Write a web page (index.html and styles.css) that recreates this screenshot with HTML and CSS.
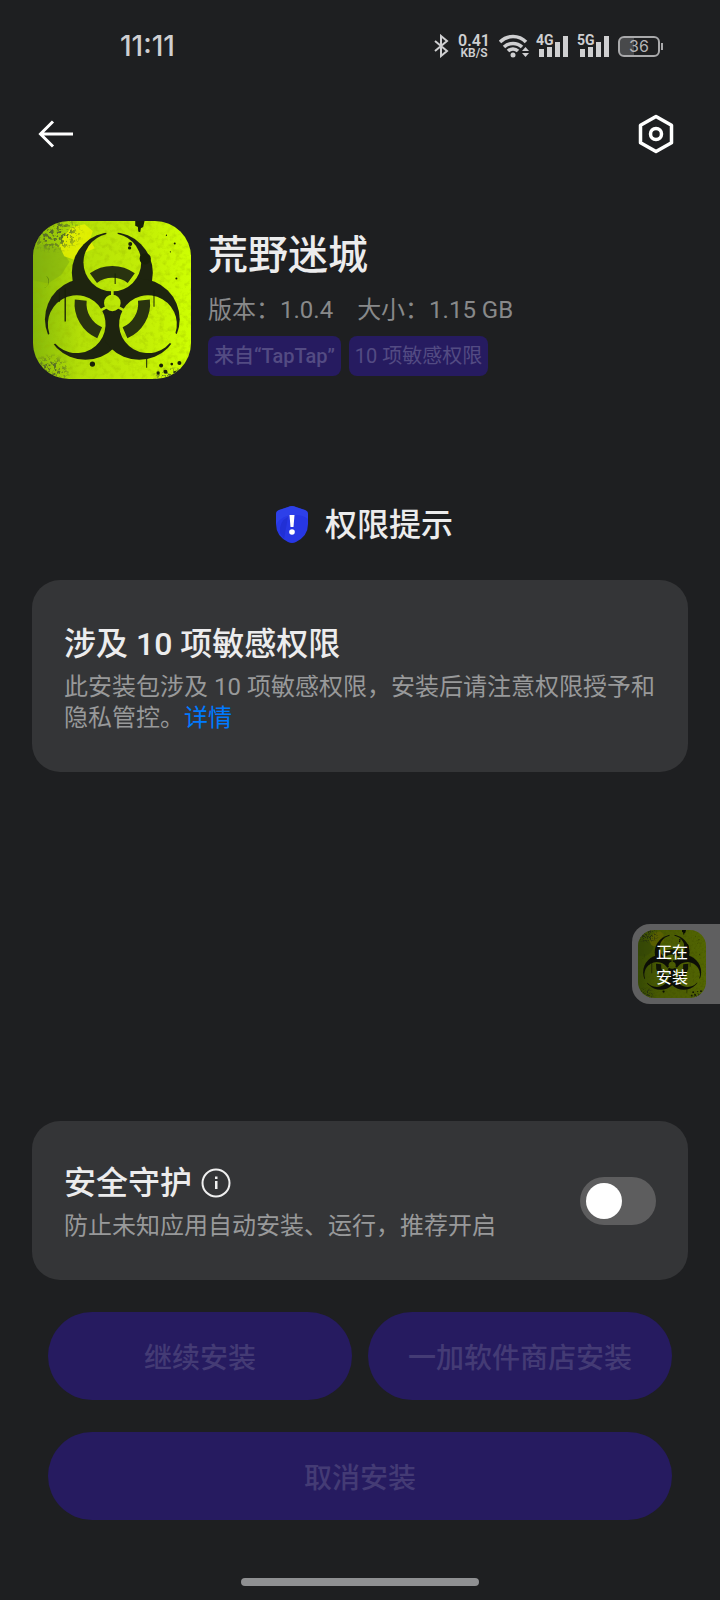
FILE: index.html
```html
<!DOCTYPE html>
<html lang="zh-CN">
<head>
  <meta charset="UTF-8">
  <meta name="viewport" content="width=device-width, initial-scale=1.0">
  <title>荒野迷城</title>
  <link rel="stylesheet" href="styles.css">
</head>
<body>
<!-- 应用图标，页面里用两次 -->
<svg class="defs" width="0" height="0" aria-hidden="true">
  <defs>
    <linearGradient id="lime" x1="0" y1="0" x2="1" y2="0">
      <stop offset="0" stop-color="#86b80a"/>
      <stop offset="0.3" stop-color="#b4e007"/>
      <stop offset="0.7" stop-color="#c3ee06"/>
      <stop offset="1" stop-color="#ceff02"/>
    </linearGradient>
    <radialGradient id="fade">
      <stop offset="0.4" stop-color="#fff"/>
      <stop offset="1" stop-color="#000"/>
    </radialGradient>
    <filter id="grunge" x="0" y="0" width="1" height="1">
      <feTurbulence type="fractalNoise" baseFrequency="0.1" numOctaves="3" seed="8"/>
      <feColorMatrix values="0 0 0 0 0.1  0 0 0 0 0.16  0 0 0 0 0.02  9 0 0 0 -4.5"/>
    </filter>
    <filter id="mottle" x="0" y="0" width="1" height="1">
      <feTurbulence type="fractalNoise" baseFrequency="0.06" numOctaves="4" seed="3"/>
      <feColorMatrix values="0 0 0 0 0.3  0 0 0 0 0.45  0 0 0 0 0  0 3 0 0 -1.4"/>
    </filter>
    <mask id="corners">
      <ellipse cx="100" cy="70" rx="95" ry="60" fill="url(#fade)"/>
      <ellipse cx="90" cy="485" rx="65" ry="55" fill="url(#fade)"/>
      <ellipse cx="460" cy="500" rx="70" ry="30" fill="url(#fade)"/>
    </mask>
    <mask id="cut">
      <rect x="38" y="32" width="476" height="476" fill="#fff"/>
      <g id="hole">
        <circle cx="277" cy="157" r="87"/>
        <path d="M259 50h34v40h-34zM273 230h8v50h-8z"/>
      </g>
      <use href="#hole" transform="rotate(120 277 281)"/>
      <use href="#hole" transform="rotate(240 277 281)"/>
      <circle cx="277" cy="279" r="25"/>
    </mask>
    <symbol id="app-art" viewBox="38 32 476 476">
      <rect x="38" y="32" width="476" height="476" fill="url(#lime)"/>
      <rect x="38" y="32" width="476" height="476" filter="url(#mottle)" opacity="0.3"/>
      <path d="M38 110q40-20 80 5l30 40-25 40-40 25-45-10z" fill="#7eac12" opacity="0.5"/>
      <path d="M130 80l24-30 40-8 24 20-8 26 14 26-30 14-28 22-34-12-14-30z" fill="#f2f500" opacity="0.7"/>
      <path d="M60 230q20 8 24-10 2-16-8-24 12 6 10 22-6 20-26 12z" fill="#577d0a"/>
      <rect x="38" y="32" width="476" height="476" filter="url(#grunge)" mask="url(#corners)"/>
      <g mask="url(#cut)" fill="#1e240f">
        <circle cx="277" cy="188" r="122"/>
        <circle cx="196" cy="328" r="122"/>
        <circle cx="358" cy="328" r="122"/>
      </g>
      <g fill="none" stroke="#29330f" stroke-width="36">
        <path id="arc" d="M220 204a96 96 0 0 1 114 0"/>
        <use href="#arc" transform="rotate(120 277 281)"/>
        <use href="#arc" transform="rotate(240 277 281)"/>
      </g>
      <g fill="#182008">
        <path d="M346 32h28l-4 18-7 4-2 12-6-2-1-14-8-4z"/>
        <circle cx="331" cy="101" r="6"/>
        <circle cx="329" cy="113" r="5"/>
        <circle cx="376" cy="146" r="17"/>
        <circle cx="217" cy="463" r="8"/>
        <circle cx="424" cy="467" r="6"/>
        <circle cx="415" cy="490" r="5"/>
        <circle cx="437" cy="486" r="6"/>
        <circle cx="456" cy="463" r="4"/>
        <circle cx="479" cy="460" r="6"/>
        <circle cx="466" cy="487" r="3"/>
        <circle cx="440" cy="75" r="2"/>
        <circle cx="465" cy="100" r="3"/>
        <circle cx="452" cy="125" r="2"/>
        <circle cx="470" cy="205" r="3"/>
        <path d="M133 235h4v100h-4zM284 190h3v32h-3zM401 240h3v50h-3zM379 448h3v26h-3zM116 245h3v30h-3z"/>
      </g>
    </symbol>
  </defs>
</svg>

<div class="page">
  <div class="status-bar">
    <span class="time">11:11</span>
    <div class="status-icons">
      <svg width="16" height="24" viewBox="0 0 16 24" fill="none" stroke="#cfcfd1" stroke-width="2"><path d="M2 7l12 10-6 5V2l6 5L2 17"/></svg>
      <div class="speed"><span>0.41</span><span class="unit">KB/S</span></div>
      <svg class="wifi" width="32" height="24" viewBox="0 0 32 24">
        <g fill="none" stroke="#cfcfd1" stroke-width="3.500">
          <path d="M1 8a18 18 0 0 1 26 0M5 13a13 13 0 0 1 18 0M9 17a7 7 0 0 1 10 0"/>
        </g>
        <circle cx="14" cy="21" r="2.500" fill="#cfcfd1"/>
        <path d="M23 17l3.500-4 3.500 4zM23 19l3.500 4 3.500-4z" fill="#cfcfd1"/>
      </svg>
      <div class="signal">
        <span>4G</span>
        <svg width="30" height="22" viewBox="0 0 30 22" fill="#cfcfd1"><path d="M1 14h5v8H1zM9 12h5v10H9zM17 7h5v15h-5zM25 1h5v21h-5z"/></svg>
      </div>
      <div class="signal">
        <span>5G</span>
        <svg width="30" height="22" viewBox="0 0 30 22" fill="#cfcfd1"><path d="M1 14h5v8H1zM9 12h5v10H9zM17 7h5v15h-5zM25 1h5v21h-5z"/></svg>
      </div>
      <div class="battery">36</div>
    </div>
  </div>

  <header class="header">
    <button class="icon-button" aria-label="返回">
      <svg width="40" height="40" viewBox="0 0 40 40" fill="none" stroke="#fff" stroke-width="3"><path d="M37 20H4M17 7.500L4.500 20 17 32.500"/></svg>
    </button>
    <button class="icon-button" aria-label="设置">
      <svg width="40" height="40" viewBox="0 0 40 40" fill="none" stroke="#fff" stroke-width="3.500" stroke-linejoin="round"><path d="M20 2.500l15.500 8.800v17.400L20 37.500 4.500 28.700V11.300z"/><circle cx="20" cy="20" r="5.500"/></svg>
    </button>
  </header>

  <main class="content">
    <section class="app">
      <svg class="app-icon" role="img" aria-label="荒野迷城"><use href="#app-art"/></svg>
      <div class="app-info">
        <h1>荒野迷城</h1>
        <p class="meta"><span>版本：1.0.4</span><span>大小：1.15 GB</span></p>
        <div class="tags">
          <span class="tag">来自“TapTap”</span>
          <span class="tag">10 项敏感权限</span>
        </div>
      </div>
    </section>

    <div class="notice">
      <svg width="34" height="40" viewBox="0 0 34 40">
        <path d="M17 1q2 0 4 1l9 3q3 1 3 4v10q0 12-12 18-4 2-8 0Q1 31 1 19V9q0-3 3-4l9-3q2-1 4-1z" fill="#2737e4"/>
        <path d="M1 19q7-10 20-9 7 0 12 4V9q0-3-3-4l-9-3q-4-2-8 0L4 5Q1 6 1 9z" fill="#3449ee" opacity="0.5"/>
        <path d="M5 28q-1-12 8-16l-4 22z" fill="#1a25bd" opacity="0.4"/>
        <path d="M14.500 10h5l-1 12h-3z" fill="#fff"/>
        <circle cx="17" cy="27" r="2.800" fill="#fff"/>
      </svg>
      <h2>权限提示</h2>
    </div>

    <section class="card">
      <h2>涉及 10 项敏感权限</h2>
      <p>此安装包涉及 10 项敏感权限，安装后请注意权限授予和隐私管控。<a href="#">详情</a></p>
    </section>

    <section class="card guard">
      <div>
        <h2>
          <label for="guard">安全守护</label>
          <svg width="30" height="30" viewBox="0 0 30 30"><circle cx="15" cy="15" r="13.500" fill="none" stroke="#f0f0f0" stroke-width="2"/><path d="M14 13h2.500v8H14zM14 8.500h2.500V11H14z" fill="#f0f0f0"/></svg>
        </h2>
        <p>防止未知应用自动安装、运行，推荐开启</p>
      </div>
      <input type="checkbox" id="guard" class="switch">
    </section>

    <div class="actions">
      <button>继续安装</button>
      <button>一加软件商店安装</button>
      <button class="wide">取消安装</button>
    </div>
  </main>

  <div class="home-bar"></div>
</div>

<!-- 右侧悬浮的安装进度 -->
<div class="floating">
  <svg class="floating-icon" aria-hidden="true"><use href="#app-art"/></svg>
  <span>正在<br>安装</span>
</div>
</body>
</html>
```

FILE: styles.css
```css
* {
  box-sizing: border-box;
}
body {
  margin: 0;
  background-color: #1e1f21;
  color: #ececed;
  font-family: Roboto, "Noto Sans CJK SC", sans-serif;
}
h1, h2, p {
  margin: 0;
}
.defs {
  position: absolute;
}
.page {
  display: flex;
  flex-direction: column;
  min-height: 100vh;
}

/* 状态栏 */
.status-bar {
  display: flex;
  justify-content: space-between;
  align-items: center;
  height: 92px;
  padding: 0 60px 0 120px;
  color: #cfcfd1;
}
.time {
  font-family: Inter, sans-serif;
  font-size: 28px;
  font-weight: 500;
}
.status-icons {
  display: flex;
  align-items: center;
  gap: 9px;
}
.speed {
  display: flex;
  flex-direction: column;
  align-items: center;
  font-size: 16px;
  line-height: 13px;
  font-weight: 600;
}
.unit {
  font-size: 12px;
  line-height: 12px;
}
.wifi {
  margin-right: -4px;
}
.signal {
  position: relative;
  display: flex;
  padding-left: 2px;
}
.signal span {
  position: absolute;
  left: 0;
  top: -2px;
  font-size: 14px;
  line-height: 14px;
  font-weight: 700;
}
.battery {
  position: relative;
  width: 42px;
  height: 21px;
  border: 2px solid #a9a9ab;
  border-radius: 6px;
  background: linear-gradient(to right, #48494b 36%, transparent 36%);
  color: #b4b4b6;
  font-family: Inter, sans-serif;
  font-size: 16px;
  line-height: 17px;
  text-align: center;
}
.battery::after {
  content: "";
  position: absolute;
  right: -5px;
  top: 5px;
  width: 2px;
  height: 7px;
  background-color: #a9a9ab;
}

/* 顶部 */
.header {
  display: flex;
  justify-content: space-between;
  align-items: center;
  height: 84px;
  padding: 0 44px 0 36px;
}
.icon-button {
  display: flex;
  padding: 0;
  border: none;
  background: none;
  cursor: pointer;
}

.content {
  flex: 1;
  display: flex;
  flex-direction: column;
  padding: 44px 32px 0;
}
.app {
  display: flex;
  gap: 16px;
}
.app-icon {
  flex: none;
  width: 158px;
  height: 158px;
  margin: 1px;
  border-radius: 36px;
}
.app-info {
  padding-top: 8px;
}
h1 {
  font-size: 40px;
  line-height: 56px;
  font-weight: 500;
}
.meta {
  display: flex;
  gap: 24px;
  margin-top: 10px;
  font-size: 24px;
  line-height: 32px;
  color: #88898a;
}
.tags {
  display: flex;
  gap: 8px;
  margin-top: 10px;
}
.tag {
  padding: 4px 6px;
  border-radius: 8px;
  background-color: #261b60;
  color: #534b83;
  font-size: 20px;
  line-height: 32px;
  font-weight: 500;
}
.tag + .tag {
  font-weight: 400;
}
.notice {
  display: flex;
  justify-content: center;
  align-items: center;
  gap: 16px;
  margin: 121px 0 31px;
  padding-left: 8px;
}
h2 {
  font-size: 32px;
  line-height: 48px;
  font-weight: 500;
}

/* 卡片 */
.card {
  padding: 40px 32px 38px;
  border-radius: 28px;
  background-color: #343537;
}
.card p {
  margin-top: 4px;
  font-size: 24px;
  line-height: 31px;
  color: #98999a;
}
.card a {
  color: #007aff;
  text-decoration: none;
}
.guard {
  display: flex;
  justify-content: space-between;
  align-items: center;
  margin-top: auto;
  padding-top: 38px;
}
.guard h2 {
  display: flex;
  align-items: center;
  gap: 9px;
}
.switch {
  appearance: none;
  flex: none;
  width: 76px;
  height: 48px;
  margin: 0;
  padding: 6px;
  border-radius: 24px;
  background-color: #5d5d5e;
  cursor: pointer;
}
.switch::before {
  content: "";
  display: block;
  width: 36px;
  height: 36px;
  border-radius: 50%;
  background-color: #fff;
}
.switch:checked {
  background-color: #2737e4;
}
.switch:checked::before {
  margin-left: auto;
}

/* 底部按钮 */
.actions {
  display: grid;
  grid-template-columns: 1fr 1fr;
  gap: 32px 16px;
  padding: 32px 16px 58px;
}
.actions button {
  height: 88px;
  padding: 0;
  border: none;
  border-radius: 44px;
  background-color: #261b60;
  color: #443b75;
  font-family: inherit;
  font-size: 28px;
  font-weight: 500;
}
.actions .wide {
  grid-column: span 2;
}
.home-bar {
  align-self: center;
  width: 33%;
  height: 8px;
  margin-bottom: 14px;
  border-radius: 4px;
  background-color: #8f9092;
}

.floating {
  position: fixed;
  right: 0;
  top: 924px;
  display: flex;
  padding: 6px 14px 6px 6px;
  border-radius: 18px 0 0 18px;
  background-color: #5f5f60;
}
.floating-icon {
  width: 68px;
  height: 68px;
  border-radius: 16px;
  filter: brightness(0.4);
}
.floating span {
  position: absolute;
  left: 6px;
  top: 16px;
  width: 68px;
  color: #fff;
  font-size: 16px;
  line-height: 25px;
  text-align: center;
}
```
